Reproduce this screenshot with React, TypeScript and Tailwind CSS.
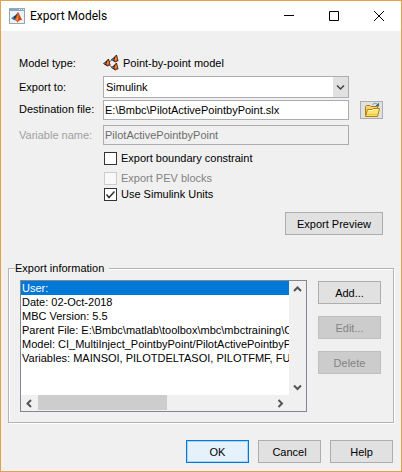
import { useState } from "react";
import type { ReactNode } from "react";
import clsx from "clsx";

const info = [
  "User:",
  "Date: 02-Oct-2018",
  "MBC Version: 5.5",
  "Parent File: E:\\Bmbc\\matlab\\toolbox\\mbc\\mbctraining\\CI_",
  "Model: CI_MultiInject_PointbyPoint/PilotActivePointbyPoin",
  "Variables: MAINSOI, PILOTDELTASOI, PILOTFMF, FUELP",
];

function AppIcon() {
  return (
    <svg width="16" height="16" viewBox="0 0 16 16" aria-hidden="true">
      <rect x="0.5" y="0.5" width="15" height="15" fill="#eef2f5" stroke="#9aa5ae" />
      <rect x="1" y="1" width="14" height="2" fill="#7fa8cc" />
      <path d="M10 1.5h1M12 1.5h1M14 1.5h1" stroke="#e8f0f7" />
      <g transform="translate(2 4) scale(0.95)">
        <path d="M0 6.5 3 4.5 5 6 3 8.5Z" fill="#3d7fae" />
        <path d="M3 4.5C5 4 6 1.5 7.5 0L5.5 6.5 3 8.5Z" fill="#1f3f63" />
        <path d="M7.5 0C9 2 10 6 12 9 10 8 9 8.5 7 11 6 9.5 5 8.5 3 8.5 5.5 7 6 3 7.5 0Z" fill="#c8401c" />
        <path d="M7.5 1C8 4 8 7 7 10 5.5 8.5 5.5 8.5 4.5 8 6.5 6 7 3 7.5 1Z" fill="#f08a23" />
      </g>
    </svg>
  );
}

function ModelIcon() {
  return (
    <svg width="16" height="16" viewBox="0 0 16 16" aria-hidden="true">
      <path d="M5 8 10 4M5 9 10 13" stroke="#555" />
      {["translate(0 4)", "translate(8 0)", "translate(8 8)"].map((t) => (
        <g key={t} transform={t}>
          <path d="M0 4.5 2 3 5 0 6 0 7.5 6 6 6.5 4.5 7.5 2 6Z" fill="#2e2620" />
          <path d="M5.2 .8 6.8 5.600 4.600 6.800 3 5.200Z" fill="#d8401c" />
          <path d="M5 1 6 4 4.600 6 3.600 4.500Z" fill="#fb8c24" />
          <path d="M.8 4.400 2.400 3.400 3 4.200 2 5.200Z" fill="#5d7f86" />
        </g>
      ))}
    </svg>
  );
}

function FolderIcon() {
  return (
    <svg width="16" height="16" viewBox="0 0 16 16" aria-hidden="true">
      <path d="M8.5 3C9.5 .8 12 .8 13.5 2.5" fill="none" stroke="#6f8fb0" />
      <path d="M15 .5V4.5H11Z" fill="#41678f" />
      <path d="M1.5 13.5V4.5L2.5 3.5H6L7 4.5H13.5V13.5Z" fill="#f3d36b" stroke="#b07d12" />
      <path d="M1.5 14.5 3.5 7.5H8L9 6.5H15.5L13.5 14.5Z" fill="#fbe36c" stroke="#b07d12" />
      <path d="M4.5 8.5H8.5L9.5 7.5H14" fill="none" stroke="#fff8c8" />
      <path d="M3 12.5H13.5" stroke="#f0c23c" />
    </svg>
  );
}

const chevrons = {
  up: "M1 6 4.5 2.5 8 6",
  down: "M1 2.5 4.5 6 8 2.5",
  left: "M6 1 2.5 4.5 6 8",
  right: "M2.5 1 6 4.5 2.5 8",
};

function ScrollButton({ dir }: { dir: keyof typeof chevrons }) {
  return (
    <button type="button" aria-label={`Scroll ${dir}`} className="grid h-4 w-[17px] place-items-center">
      <svg width="9" height="9" viewBox="0 0 9 9" fill="none" stroke="#555" strokeWidth="2" aria-hidden="true">
        <path d={chevrons[dir]} />
      </svg>
    </button>
  );
}

function Btn({ children, primary, disabled, className }: { children: ReactNode; primary?: boolean; disabled?: boolean; className?: string }) {
  return (
    <button
      type="button"
      disabled={disabled}
      className={clsx(
        "h-[23px] border",
        primary && "border-[#0078d7] bg-[#e5f1fb] shadow-[inset_0_0_0_1px_#a9d4f5]",
        disabled && "border-[#bfbfbf] bg-[#cccccc] text-[#838383]",
        !primary && !disabled && "border-[#adadad] bg-[#e1e1e1]",
        className ?? "w-[63px]",
      )}
    >
      {children}
    </button>
  );
}

function Check({ label, checked, disabled }: { label: string; checked?: boolean; disabled?: boolean }) {
  const [on, setOn] = useState(!!checked);
  return (
    <label className={clsx("flex items-center gap-1", disabled && "text-[#838383]")}>
      <span className="relative grid size-[13px]">
        <input
          type="checkbox"
          checked={on}
          disabled={disabled}
          onChange={() => setOn(!on)}
          className="size-[13px] appearance-none border border-[#333] bg-white disabled:border-[#cccccc] disabled:bg-[#f8f8f8]"
        />
        {on && (
          <svg viewBox="0 0 13 13" className="pointer-events-none absolute inset-0" fill="none" stroke="#333" strokeWidth="1.5" aria-hidden="true">
            <path d="M2.5 6.5 5 9.5 10.5 3.5" />
          </svg>
        )}
      </span>
      {label}
    </label>
  );
}

export default function App() {
  const [selected, setSelected] = useState(0);

  return (
    <div className="border border-[#e2a24b] bg-[#f0f0f0] font-['Liberation_Sans',Arial,sans-serif] text-[11px] leading-[14px] text-black">
      <header className="flex h-[30px] items-center bg-white pl-2">
        <AppIcon />
        <h1 className="ml-[5px] flex-1 font-[Roboto,sans-serif] text-[12px]">Export Models</h1>
        <div className="flex items-center gap-[35px] pr-[17px]">
          <button type="button" aria-label="Minimize">
            <svg width="10" height="10" stroke="#000"><path d="M0 4.5H10" /></svg>
          </button>
          <button type="button" aria-label="Maximize">
            <svg width="10" height="10" fill="none" stroke="#000"><path d="M.5.5H9.5V9.5H.5Z" /></svg>
          </button>
          <button type="button" aria-label="Close">
            <svg width="10" height="10" stroke="#000"><path d="M0 0 10 10M10 0 0 10" /></svg>
          </button>
        </div>
      </header>

      <main className="pt-6 pb-2">
        <div className="grid grid-cols-[84px_1fr_34px] items-center px-[18px]">
          <span className="mb-[5px]">Model type:</span>
          <span className="mb-[5px] flex h-4 items-center gap-1">
            <ModelIcon />
            Point-by-point model
          </span>
          <span />

          <label htmlFor="target">Export to:</label>
          <div className="relative">
            <select id="target" className="h-[22px] w-full appearance-none border border-[#abadb3] bg-white pl-0.5">
              <option>Simulink</option>
            </select>
            <span className="pointer-events-none absolute top-px right-px bottom-px grid w-[15px] place-items-center bg-[#e1e1e1]">
              <svg width="9" height="9" fill="none" stroke="#444" strokeWidth="1.5" aria-hidden="true"><path d={chevrons.down} /></svg>
            </span>
          </div>
          <span />

          <label htmlFor="file">Destination file:</label>
          <input id="file" defaultValue="E:\Bmbc\PilotActivePointbyPoint.slx" className="mt-0.5 h-5 w-full min-w-0 border border-[#abadb3] bg-white px-px" />
          <button type="button" aria-label="Browse" className="mt-0.5 ml-[11px] grid h-[18px] place-items-center border border-[#adadad] bg-[#e1e1e1]">
            <FolderIcon />
          </button>

          <label htmlFor="variable" className="mt-1 text-[#a0a0a0]">Variable name:</label>
          <input id="variable" disabled defaultValue="PilotActivePointbyPoint" className="mt-[5px] h-5 w-full min-w-0 border border-[#abadb3] px-px text-[#6d6d6d]" />
        </div>

        <div className="mt-1.5 flex flex-col pl-[103px]">
          <Check label="Export boundary constraint" />
          <div className="mt-1.5 flex flex-col gap-0.5">
            <Check label="Export PEV blocks" disabled />
            <Check label="Use Simulink Units" checked />
          </div>
        </div>

        <div className="mt-[11px] flex justify-end pr-[18px]">
          <Btn className="w-[98px]">Export Preview</Btn>
        </div>

        <fieldset className="mx-[7px] mt-[26px] min-w-0 border border-[#b4b4b4] pt-[5px] pr-3 pb-2.5 pl-[11px] shadow-[1px_1px_0_#fff,inset_1px_1px_0_#fff]">
          <legend className="-ml-[5px] bg-[#f0f0f0] pr-[5px]">Export information</legend>
          <div className="flex items-start gap-[11px]">
            <div className="grid h-[132px] min-w-0 flex-1 grid-cols-[1fr_17px] grid-rows-[1fr_16px] border border-[#828790]">
              <ul role="listbox" aria-label="Export information" className="min-w-0 overflow-hidden bg-white whitespace-nowrap">
                {info.map((line, i) => (
                  <li
                    key={line}
                    role="option"
                    aria-selected={i === selected}
                    onClick={() => setSelected(i)}
                    className={clsx("px-px", i === selected && "bg-[#0078d7] text-white")}
                  >
                    {line}
                  </li>
                ))}
              </ul>
              <div className="flex flex-col justify-between">
                <ScrollButton dir="up" />
                <ScrollButton dir="down" />
              </div>
              <div className="flex">
                <ScrollButton dir="left" />
                <span className="h-[15px] w-[129px] bg-[#cdcdcd]" />
                <span className="flex-1" />
                <ScrollButton dir="right" />
              </div>
            </div>
            <div className="flex flex-col gap-3 pt-px">
              <Btn>Add...</Btn>
              <Btn disabled>Edit...</Btn>
              <Btn disabled>Delete</Btn>
            </div>
          </div>
        </fieldset>

        <footer className="mt-[17px] flex justify-end gap-[9px] pr-2">
          <Btn primary>OK</Btn>
          <Btn>Cancel</Btn>
          <Btn>Help</Btn>
        </footer>
      </main>
    </div>
  );
}
